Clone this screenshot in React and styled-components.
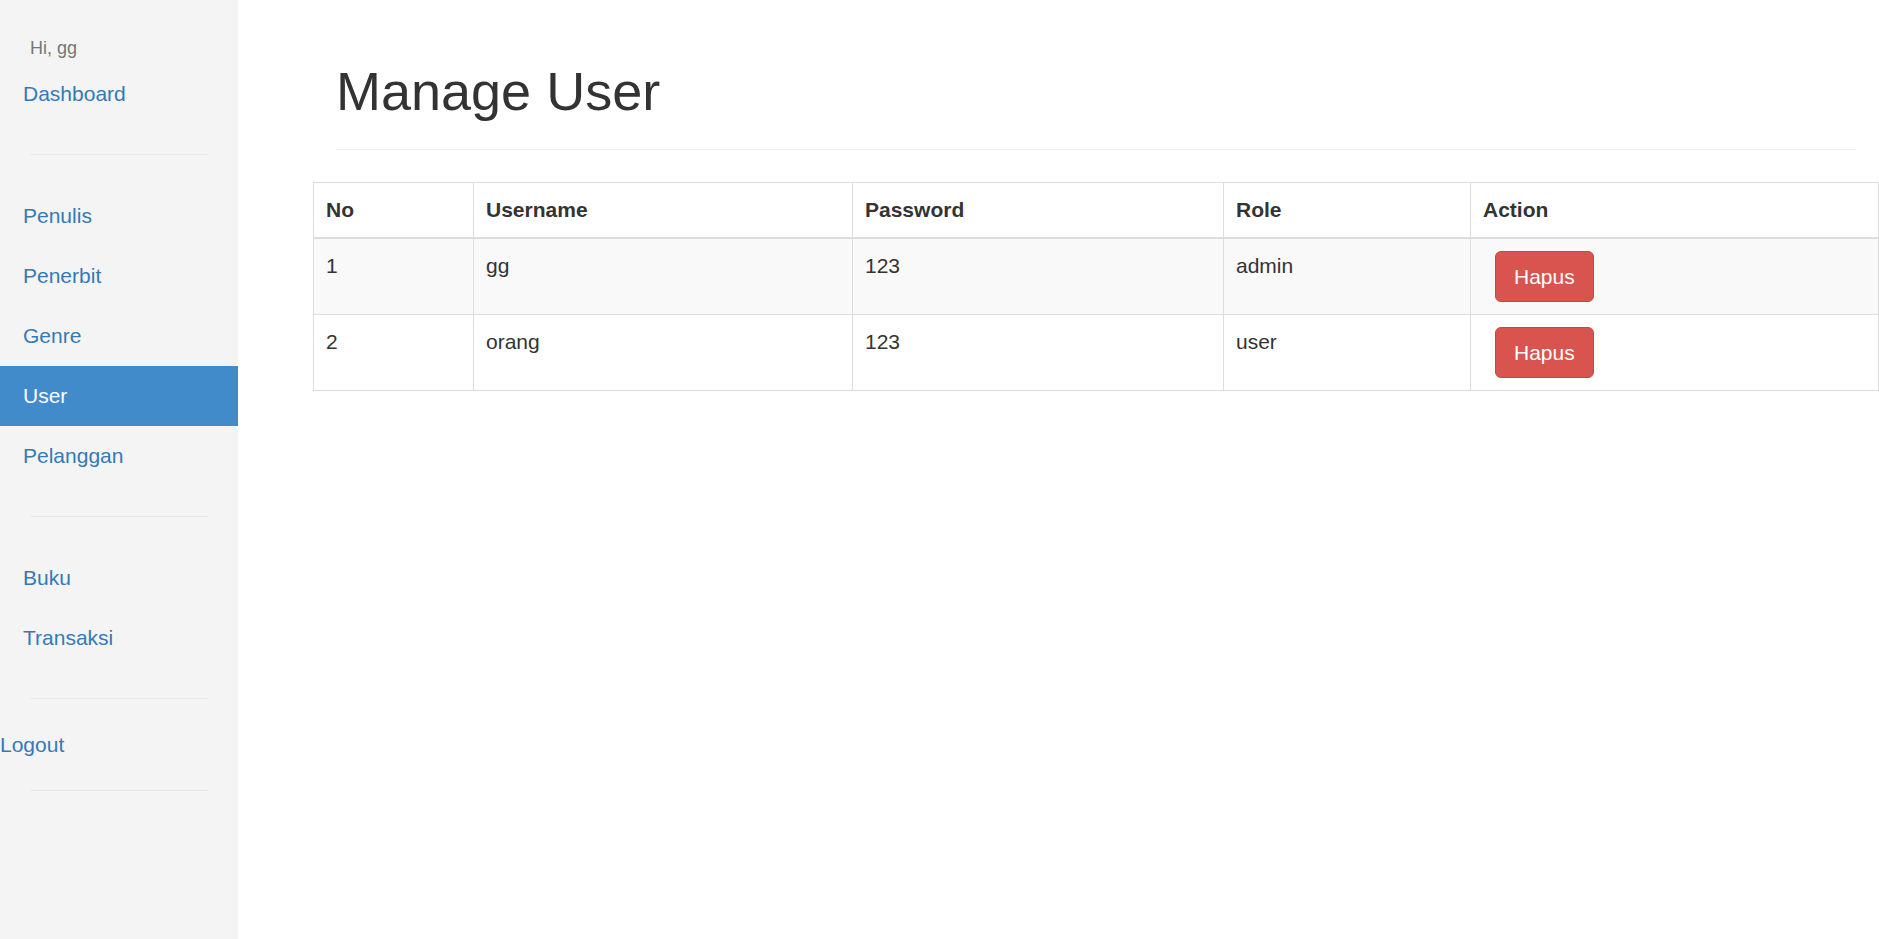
import React from 'react';
import styled, { createGlobalStyle } from 'styled-components';

const GlobalStyle = createGlobalStyle`
  body {
    margin: 0;
    background: #ffffff;
    font-family: "Liberation Sans", Arial, sans-serif;
    color: #333333;
  }
  * {
    box-sizing: border-box;
  }
`;

const Page = styled.div`
  display: flex;
  min-height: 100vh;
`;

const Sidebar = styled.nav`
  width: 238px;
  flex-shrink: 0;
  background-color: #f4f4f4;
  padding-top: 35px;
  display: flex;
  flex-direction: column;
`;

const Greeting = styled.div`
  font-size: 18px;
  line-height: 26px;
  color: #777777;
  padding-left: 30px;
  margin-bottom: 3px;
`;

const NavItem = styled.a`
  display: block;
  height: 60px;
  padding: 15px 23px;
  font-size: 21px;
  line-height: 30px;
  text-decoration: none;
  color: ${props => (props.active ? '#ffffff' : '#337ab7')};
  background-color: ${props => (props.active ? '#428bca' : 'transparent')};
`;

const Divider = styled.hr`
  margin: 30px 30px 31px;
  border: 0;
  border-top: 1px solid #e8e8e8;
  height: 0;
`;

const LogoutLink = styled.a`
  display: block;
  font-size: 21px;
  line-height: 30px;
  color: #337ab7;
  text-decoration: none;
`;

const Main = styled.main`
  flex: 1;
  min-width: 0;
  padding: 62px 23px 0 98px;
`;

const PageHeader = styled.div`
  padding-bottom: 13px;
  margin-bottom: 32px;
  border-bottom: 1px solid #eeeeee;
`;

const Title = styled.h1`
  margin: 0 0 15px;
  font-size: 54px;
  font-weight: 400;
  line-height: 1.1;
  color: #333333;
`;

const Table = styled.table`
  width: calc(100% + 46px);
  margin: 0 -23px;
  border-collapse: collapse;
  table-layout: fixed;
  border: 1px solid #dddddd;
  font-size: 21px;
  line-height: 30px;
`;

const HeadCell = styled.th`
  text-align: left;
  font-weight: 700;
  padding: 12px;
  vertical-align: bottom;
  border: 1px solid #dddddd;
  border-bottom: 2px solid #dddddd;
`;

const Row = styled.tr`
  background-color: ${props => (props.striped ? '#f9f9f9' : '#ffffff')};
`;

const Cell = styled.td`
  padding: 12px;
  vertical-align: top;
  border: 1px solid #dddddd;
`;

const DangerButton = styled.button`
  display: inline-block;
  vertical-align: top;
  margin-left: 12px;
  padding: 9px 18px;
  font-family: inherit;
  font-size: 21px;
  line-height: 31px;
  color: #ffffff;
  background-color: #d9534f;
  border: 1px solid #d43f3a;
  border-radius: 6px;
  cursor: pointer;
`;

const users = [
  { no: 1, username: 'gg', password: '123', role: 'admin' },
  { no: 2, username: 'orang', password: '123', role: 'user' },
];

const groups = [
  ['Penulis', 'Penerbit', 'Genre', 'User', 'Pelanggan'],
  ['Buku', 'Transaksi'],
];

const App = () => {
  return (
    <Page>
      <GlobalStyle />
      <Sidebar>
        <Greeting>Hi, gg</Greeting>
        <NavItem href="#">Dashboard</NavItem>
        {groups.map((group, i) => (
          <React.Fragment key={i}>
            <Divider />
            {group.map(name => (
              <NavItem key={name} href="#" active={name === 'User'}>
                {name}
              </NavItem>
            ))}
          </React.Fragment>
        ))}
        <Divider />
        <LogoutLink href="#">Logout</LogoutLink>
        <Divider />
      </Sidebar>

      <Main>
        <PageHeader>
          <Title>Manage User</Title>
        </PageHeader>
        <Table>
          <colgroup>
            <col style={{ width: 160 }} />
            <col style={{ width: 379 }} />
            <col style={{ width: 371 }} />
            <col style={{ width: 247 }} />
            <col />
          </colgroup>
          <thead>
            <tr>
              <HeadCell>No</HeadCell>
              <HeadCell>Username</HeadCell>
              <HeadCell>Password</HeadCell>
              <HeadCell>Role</HeadCell>
              <HeadCell>Action</HeadCell>
            </tr>
          </thead>
          <tbody>
            {users.map((u, i) => (
              <Row key={u.no} striped={i % 2 === 0}>
                <Cell>{u.no}</Cell>
                <Cell>{u.username}</Cell>
                <Cell>{u.password}</Cell>
                <Cell>{u.role}</Cell>
                <Cell>
                  <DangerButton>Hapus</DangerButton>
                </Cell>
              </Row>
            ))}
          </tbody>
        </Table>
      </Main>
    </Page>
  );
};

export default App;
